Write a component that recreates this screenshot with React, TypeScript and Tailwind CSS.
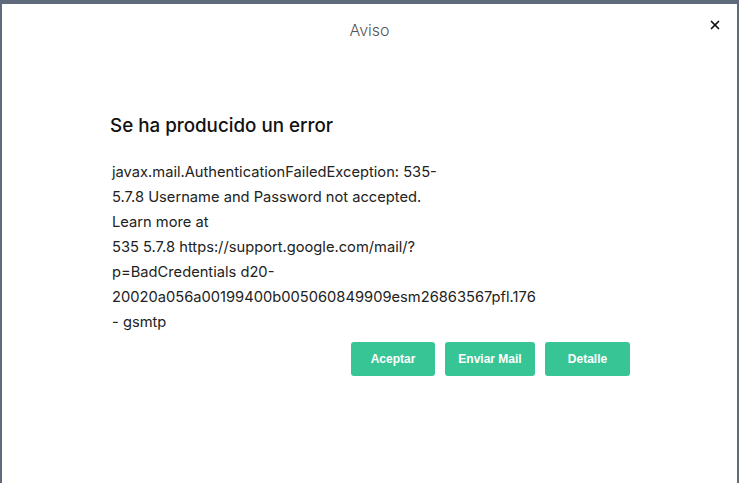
import { X } from "lucide-react";

const lines = [
	"javax.mail.AuthenticationFailedException: 535-",
	"5.7.8 Username and Password not accepted.",
	"Learn more at",
	"535 5.7.8 https://support.google.com/mail/?",
	"p=BadCredentials d20-",
	"20020a056a00199400b005060849909esm26863567pfl.176",
	"- gsmtp",
];

export default function App() {
	return (
		<div className="w-[739px] h-[483px] bg-[#5f6b7a] pt-[4px] px-[2px] overflow-hidden">
			<div className="h-full bg-white flex flex-col">
				{/* cabecera */}
				<div className="relative h-[52px] flex items-center justify-center">
					<span className="text-[16px] font-light text-[#555] font-['Inter',sans-serif] -mt-[1px]">Aviso</span>
					<button className="absolute right-[15px] top-[14px] text-[#111]">
						<X className="w-[14px] h-[14px]" strokeWidth={3} />
					</button>
				</div>

				{/* contenido */}
				<div className="ml-[108px] mr-[107px] mt-[58px] font-['Inter',sans-serif]">
					<h2 className="text-[18.8px] font-medium text-[#111] leading-[24px]">Se ha producido un error</h2>
					<div className="mt-[22px] pl-[2px] text-[14.7px] leading-[25px] text-[#222]">
						{lines.map((l) => (
							<div key={l}>{l}</div>
						))}
					</div>
					<div className="mt-[7px] flex justify-end gap-[10px] font-['Liberation_Sans',sans-serif] text-[12px] font-bold text-white">
						<button className="w-[84px] h-[34px] rounded-[3px] bg-[#38c595]">Aceptar</button>
						<button className="w-[90px] h-[34px] rounded-[3px] bg-[#38c595]">Enviar Mail</button>
						<button className="w-[85px] h-[34px] rounded-[3px] bg-[#38c595]">Detalle</button>
					</div>
				</div>
			</div>
		</div>
	);
}
